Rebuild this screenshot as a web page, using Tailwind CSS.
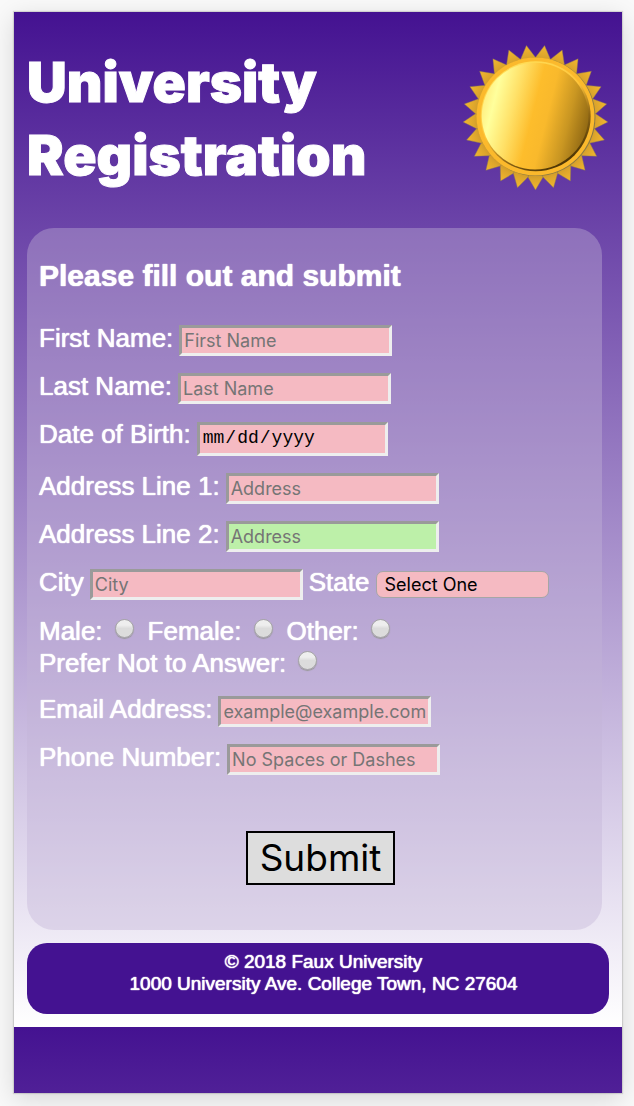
<!DOCTYPE html>
<html lang="en">
<head>
<meta charset="utf-8">
<meta name="viewport" content="width=device-width, initial-scale=1">
<title>University Registration</title>
<script src="https://cdn.jsdelivr.net/npm/@tailwindcss/browser@4"></script>
</head>
<body class="min-h-screen bg-[#f9f9f9] pt-3 pr-3 pb-[14px] pl-[14px] font-['Liberation_Sans',sans-serif] text-white">
<div class="shadow-[0_6px_24px_rgba(0,0,0,0.14),0_0_1px_1px_rgba(0,0,0,0.12)]">
<div class="bg-linear-to-b/srgb from-[#441291] to-white px-[13px] pb-[13px]">
  <header class="flex items-start justify-between pt-8">
    <h1 class="pt-[2px] font-['Arial_Black',Inter,sans-serif] text-[55px] leading-[73px] font-black [-webkit-text-stroke:1px_#fff]">University<br>Registration</h1>
    <svg class="size-[147px] shrink-0" viewBox="-73 -73 146 146" aria-hidden="true">
      <defs>
        <linearGradient id="face" x1="0" y1="0.4" x2="1" y2="0.65">
          <stop offset="0" stop-color="#ffee80"/><stop offset="0.1" stop-color="#ffff9c"/><stop offset="0.28" stop-color="#ffe168"/><stop offset="0.47" stop-color="#fdbd2c"/><stop offset="0.6" stop-color="#f9b92c"/><stop offset="0.8" stop-color="#c99622"/><stop offset="1" stop-color="#8c6512"/>
        </linearGradient>
        <linearGradient id="bevel" x1="0.2" y1="0" x2="0.8" y2="1">
          <stop offset="0" stop-color="#ffe25c"/><stop offset="0.45" stop-color="#ffc43a"/><stop offset="0.7" stop-color="#8c6414"/><stop offset="1" stop-color="#3b2800"/>
        </linearGradient>
        <linearGradient id="rayFill" x1="0" y1="1" x2="0" y2="0">
          <stop offset="0" stop-color="#f3b72e"/><stop offset="0.5" stop-color="#dca52c"/><stop offset="1" stop-color="#b88a28"/>
        </linearGradient>
        <path id="ray" d="M0 72L-7.6 59V50H7.6V59Z" fill="url(#rayFill)" stroke="#80705c" stroke-width="0.4"/>
      </defs>
      <g>
        <use href="#ray"/><use href="#ray" transform="rotate(14.4)"/><use href="#ray" transform="rotate(28.8)"/><use href="#ray" transform="rotate(43.2)"/><use href="#ray" transform="rotate(57.6)"/><use href="#ray" transform="rotate(72)"/><use href="#ray" transform="rotate(86.4)"/><use href="#ray" transform="rotate(100.8)"/><use href="#ray" transform="rotate(115.2)"/><use href="#ray" transform="rotate(129.6)"/><use href="#ray" transform="rotate(144)"/><use href="#ray" transform="rotate(158.4)"/><use href="#ray" transform="rotate(172.8)"/><use href="#ray" transform="rotate(187.2)"/><use href="#ray" transform="rotate(201.6)"/><use href="#ray" transform="rotate(216)"/><use href="#ray" transform="rotate(230.4)"/><use href="#ray" transform="rotate(244.8)"/><use href="#ray" transform="rotate(259.2)"/><use href="#ray" transform="rotate(273.6)"/><use href="#ray" transform="rotate(288)"/><use href="#ray" transform="rotate(302.4)"/><use href="#ray" transform="rotate(316.8)"/><use href="#ray" transform="rotate(331.2)"/><use href="#ray" transform="rotate(345.6)"/>
      </g>
      <circle cx="0.7" cy="-0.6" r="58.8" fill="#8b7a45"/>
      <circle cx="0" cy="-1" r="58.6" fill="#fbb92c"/>
      <circle cx="0.2" cy="-1.2" r="54.6" fill="url(#bevel)"/>
      <circle cx="-0.4" cy="-1.4" r="53" fill="url(#face)"/>
    </svg>
  </header>

  <form class="mt-9 mr-[7px] rounded-[27px] bg-[#c3b5d6]/40 px-3 pt-[30px] pb-[45px] text-[26px] leading-[31px] [text-shadow:0_0_1px_#fff,0_0_1px_#fff]">
    <h2 class="text-[30px] leading-[36px] font-bold">Please fill out and submit</h2>
    <div class="mt-[29px] flex flex-col gap-[15px]">
      <div class="flex items-baseline gap-[6px]">
        <label for="first">First Name:</label>
        <input id="first" type="text" placeholder="First Name" class="h-[31px] w-[213px] border-[3px] border-t-[#9a9a9a] border-r-[#eee] border-b-[#eee] border-l-[#9a9a9a] bg-[#f5bac2] px-[2px] font-['Inter',sans-serif] text-[18px] text-black placeholder:text-[#757575]">
      </div>
      <div class="flex items-baseline gap-[6px]">
        <label for="last">Last Name:</label>
        <input id="last" type="text" placeholder="Last Name" class="h-[31px] w-[213px] border-[3px] border-t-[#9a9a9a] border-r-[#eee] border-b-[#eee] border-l-[#9a9a9a] bg-[#f5bac2] px-[2px] font-['Inter',sans-serif] text-[18px] text-black placeholder:text-[#757575]">
      </div>
      <div class="flex items-baseline gap-[6px]">
        <label for="dob">Date of Birth:</label>
        <input id="dob" type="date" class="h-[34px] w-[191px] border-[3px] border-t-[#9a9a9a] border-r-[#eee] border-b-[#eee] border-l-[#9a9a9a] bg-[#f5bac2] px-[2px] font-['Liberation_Mono',monospace] text-[18px] text-black [&::-webkit-calendar-picker-indicator]:hidden">
      </div>
      <div class="flex items-baseline gap-[6px]">
        <label for="addr1">Address Line 1:</label>
        <input id="addr1" type="text" placeholder="Address" class="h-[31px] w-[213px] border-[3px] border-t-[#9a9a9a] border-r-[#eee] border-b-[#eee] border-l-[#9a9a9a] bg-[#f5bac2] px-[2px] font-['Inter',sans-serif] text-[18px] text-black placeholder:text-[#757575]">
      </div>
      <div class="flex items-baseline gap-[6px]">
        <label for="addr2">Address Line 2:</label>
        <input id="addr2" type="text" placeholder="Address" class="h-[31px] w-[213px] border-[3px] border-t-[#9a9a9a] border-r-[#eee] border-b-[#eee] border-l-[#9a9a9a] bg-[#bdf0a9] px-[2px] font-['Inter',sans-serif] text-[18px] text-black placeholder:text-[#757575]">
      </div>
      <div class="flex items-baseline gap-[6px]">
        <label for="city">City</label>
        <input id="city" type="text" placeholder="City" class="h-[31px] w-[213px] border-[3px] border-t-[#9a9a9a] border-r-[#eee] border-b-[#eee] border-l-[#9a9a9a] bg-[#f5bac2] px-[2px] font-['Inter',sans-serif] text-[18px] text-black placeholder:text-[#757575]">
        <label for="state">State</label>
        <select id="state" class="h-[27px] w-[173px] appearance-none rounded-[7px] border border-[#a6a6a6] bg-[#f5bac2] px-2 font-['Inter',sans-serif] text-[18px] leading-[25px] text-black [text-shadow:none]">
          <option>Select One</option>
        </select>
      </div>
      <div class="flex flex-wrap gap-x-[14px] leading-8">
        <div class="flex items-center gap-3"><label for="male">Male:</label><input id="male" type="radio" name="gender" class="mb-1 size-[19px] appearance-none rounded-full border border-[#a5a5a5] bg-linear-to-b from-[#eee] from-30% to-[#dcdcdc] to-50% shadow-[0_1px_1px_#999]"></div>
        <div class="flex items-center gap-3"><label for="female">Female:</label><input id="female" type="radio" name="gender" class="mb-1 size-[19px] appearance-none rounded-full border border-[#a5a5a5] bg-linear-to-b from-[#eee] from-30% to-[#dcdcdc] to-50% shadow-[0_1px_1px_#999]"></div>
        <div class="flex items-center gap-3"><label for="other">Other:</label><input id="other" type="radio" name="gender" class="mb-1 size-[19px] appearance-none rounded-full border border-[#a5a5a5] bg-linear-to-b from-[#eee] from-30% to-[#dcdcdc] to-50% shadow-[0_1px_1px_#999]"></div>
        <div class="flex items-center gap-3"><label for="none">Prefer Not to Answer:</label><input id="none" type="radio" name="gender" class="mb-1 size-[19px] appearance-none rounded-full border border-[#a5a5a5] bg-linear-to-b from-[#eee] from-30% to-[#dcdcdc] to-50% shadow-[0_1px_1px_#999]"></div>
      </div>
      <div class="flex items-baseline gap-[6px]">
        <label for="email">Email Address:</label>
        <input id="email" type="email" placeholder="example@example.com" class="h-[31px] w-[213px] border-[3px] border-t-[#9a9a9a] border-r-[#eee] border-b-[#eee] border-l-[#9a9a9a] bg-[#f5bac2] px-[2px] font-['Inter',sans-serif] text-[18px] text-black placeholder:text-[#757575]">
      </div>
      <div class="flex items-baseline gap-[6px]">
        <label for="phone">Phone Number:</label>
        <input id="phone" type="tel" placeholder="No Spaces or Dashes" class="h-[31px] w-[213px] border-[3px] border-t-[#9a9a9a] border-r-[#eee] border-b-[#eee] border-l-[#9a9a9a] bg-[#f5bac2] px-[2px] font-['Inter',sans-serif] text-[18px] text-black placeholder:text-[#757575]">
      </div>
    </div>
    <div class="mt-[56px] flex justify-center pl-3">
      <button type="submit" class="h-[54px] border-2 border-black bg-[#ddd] px-3 font-['Inter',sans-serif] text-[37px] leading-[50px] text-black [text-shadow:none]">Submit</button>
    </div>
  </form>

  <footer class="mt-[13px] rounded-[20px] bg-[#441291] pt-2 pr-1 pb-[19px] pl-[15px] text-center text-[19px] leading-[22px] [text-shadow:0_0_1px_#fff,0_0_1px_#fff]">
    <p>© 2018 Faux University</p>
    <p>1000 University Ave. College Town, NC 27604</p>
  </footer>
</div>
<div class="h-[66px] bg-linear-to-b/srgb from-[#441291] to-[#502097]"></div>
</div>
</body>
</html>
